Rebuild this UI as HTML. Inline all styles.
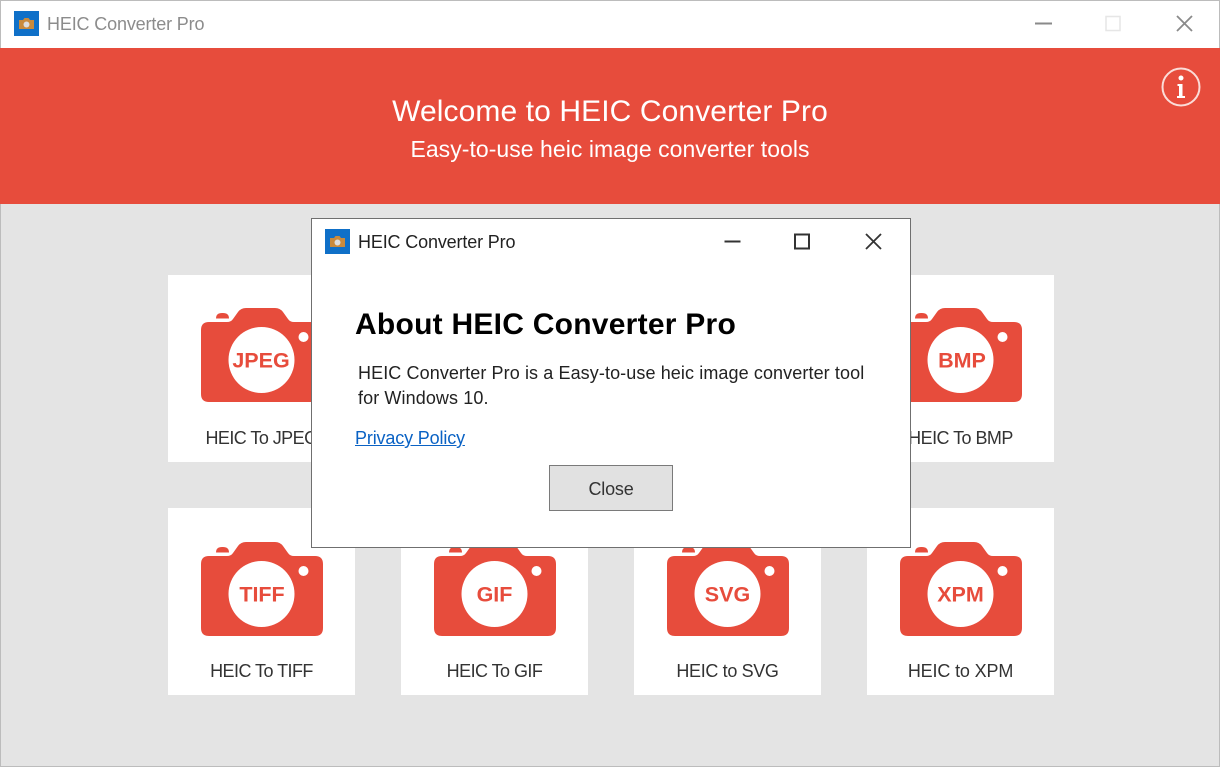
<!DOCTYPE html>
<html><head><meta charset="utf-8"><style>
html,body{margin:0;padding:0;background:#fff}
#r{position:relative;width:1220px;height:768px;overflow:hidden;background:#e4e4e4;font-family:"Liberation Sans",sans-serif}
.a{position:absolute;white-space:nowrap}
.card{position:absolute;width:187px;height:187px;background:#fff}
.lbl{position:absolute;left:0;width:187px;text-align:center;top:152px;font-size:18px;line-height:22px;color:#333;letter-spacing:-.55px}
.lo{letter-spacing:-.35px}
.card svg{position:absolute;left:32.5px;top:33px}
.row2 svg{top:33.5px}
.ct{font:bold 21.5px "Liberation Sans",sans-serif;fill:#e74c3c;text-anchor:middle}
</style></head><body><div id="r">
<div class="a" style="left:0;top:0;width:1220px;height:48px;background:#fff"></div>
<div class="a" style="left:0;top:0;width:1220px;height:1px;background:#bcbcbc"></div>
<div class="a" style="left:0;top:0;width:1px;height:768px;background:#bcbcbc"></div>
<div class="a" style="left:1219px;top:0;width:1px;height:768px;background:#bcbcbc"></div>
<div class="a" style="left:0;top:766px;width:1220px;height:1px;background:#bcbcbc"></div>
<div class="a" style="left:0;top:767px;width:1220px;height:1px;background:#fff"></div>
<svg class="a" style="left:14px;top:11px" width="25" height="25" viewBox="0 0 25 25"><rect width="25" height="25" fill="#0f70c8"/><path d="M5 9h4l1.500-2h4L16 9h4v9H5z" fill="#c98a3c"/><circle cx="12.500" cy="13.500" r="3" fill="#ddd"/></svg>
<div class="a" style="left:47px;top:13px;font-size:18px;line-height:22px;color:#8c8c8c;letter-spacing:-.15px">HEIC Converter Pro</div>
<svg class="a" style="left:1030px;top:10px" width="170" height="28" viewBox="0 0 170 28"><path d="M5 13.500h17" stroke="#8a8a8a" stroke-width="2"/><rect x="76" y="6.500" width="14" height="14" fill="none" stroke="#e6e6e6" stroke-width="1.500"/><path d="M147 6l15 15M162 6l-15 15" stroke="#8a8a8a" stroke-width="1.800" fill="none"/></svg>

<div class="a" style="left:0;top:48px;width:1220px;height:156px;background:#e74c3c"></div>
<div class="a" style="left:0;top:94px;width:1220px;text-align:center;font-size:30px;line-height:36px;color:#fff;letter-spacing:.1px">Welcome to HEIC Converter Pro</div>
<div class="a" style="left:0;top:135px;width:1220px;text-align:center;font-size:23px;line-height:28px;color:#fff;letter-spacing:.04px">Easy-to-use heic image converter tools</div>
<svg class="a" style="left:1160px;top:66px" width="42" height="42" viewBox="0 0 42 42"><circle cx="21" cy="21" r="18.500" fill="none" stroke="#fbdcd8" stroke-width="2"/><circle cx="21" cy="12" r="2.500" fill="#fff"/><path d="M17.500 18h5v12h2.500v2h-8v-2h2V20h-1.500z" fill="#fff"/></svg>

<svg width="0" height="0" style="position:absolute"><defs><symbol id="cam" viewBox="0 0 122 94"><path fill="#e74c3c" d="M8 14H26Q30 14 32 11L37 4Q40 0 45 0H74Q79 0 82 4L87 11Q89 14 93 14H114Q122 14 122 22V86Q122 94 114 94H8Q0 94 0 86V22Q0 14 8 14Z"/><path fill="#e74c3c" d="M15 10.500Q15 5 21 5H22Q28 5 28 10.500Z"/><circle cx="60.500" cy="52" r="33" fill="#fff"/><circle cx="102.500" cy="29" r="5" fill="#fff"/></symbol></defs></svg>

<div class="card" style="left:168px;top:275px"><svg width="122" height="94" viewBox="0 0 122 94"><use href="#cam"/><text class="ct" x="60" y="59.500">JPEG</text></svg><div class="lbl">HEIC To JPEG</div></div>
<div class="card" style="left:867px;top:275px"><svg style="left:33px" width="122" height="94" viewBox="0 0 122 94"><use href="#cam"/><text class="ct" x="62" y="59.500">BMP</text></svg><div class="lbl">HEIC To BMP</div></div>
<div class="card row2" style="left:168px;top:508px"><svg width="122" height="94" viewBox="0 0 122 94"><use href="#cam"/><text class="ct" x="61" y="59.500">TIFF</text></svg><div class="lbl">HEIC To TIFF</div></div>
<div class="card row2" style="left:401px;top:508px"><svg width="122" height="94" viewBox="0 0 122 94"><use href="#cam"/><text class="ct" x="60.500" y="59.500">GIF</text></svg><div class="lbl">HEIC To GIF</div></div>
<div class="card row2" style="left:634px;top:508px"><svg width="122" height="94" viewBox="0 0 122 94"><use href="#cam"/><text class="ct" x="60.500" y="59.500">SVG</text></svg><div class="lbl lo">HEIC to SVG</div></div>
<div class="card row2" style="left:867px;top:508px"><svg width="122" height="94" viewBox="0 0 122 94"><use href="#cam"/><text class="ct" x="60.500" y="59.500">XPM</text></svg><div class="lbl lo" style="letter-spacing:-.15px">HEIC to XPM</div></div>

<div class="a" style="left:311px;top:218px;width:598px;height:328px;background:#fff;border:1px solid #6f6f6f"></div>
<svg class="a" style="left:325px;top:229px" width="25" height="25" viewBox="0 0 25 25"><rect width="25" height="25" fill="#0f70c8"/><path d="M5 9h4l1.500-2h4L16 9h4v9H5z" fill="#c98a3c"/><circle cx="12.500" cy="13.500" r="3" fill="#ddd"/></svg>
<div class="a" style="left:358px;top:231px;font-size:18px;line-height:22px;color:#222;letter-spacing:-.15px">HEIC Converter Pro</div>
<svg class="a" style="left:720px;top:228px" width="170" height="28" viewBox="0 0 170 28"><path d="M4.500 13.500h16" stroke="#333" stroke-width="2"/><rect x="75" y="6.500" width="14" height="14" fill="none" stroke="#333" stroke-width="2"/><path d="M146 6l15 15M161 6l-15 15" stroke="#333" stroke-width="1.800" fill="none"/></svg>
<div class="a" style="left:355px;top:307px;font-size:30px;font-weight:bold;line-height:36px;color:#000;letter-spacing:.25px">About HEIC Converter Pro</div>
<div class="a" style="left:358px;top:361px;font-size:18px;line-height:25px;color:#222;letter-spacing:.1px">HEIC Converter Pro is a Easy-to-use heic image converter tool<br>for Windows 10.</div>
<div class="a" style="left:355px;top:427px;font-size:18px;line-height:22px;color:#0a62c4;text-decoration:underline;letter-spacing:-.15px">Privacy Policy</div>
<div class="a" style="left:549px;top:465px;width:122px;height:44px;background:#e1e1e1;border:1px solid #7a7a7a;text-align:center;font-size:18px;line-height:47px;color:#333;letter-spacing:-.2px">Close</div>
</div></body></html>
